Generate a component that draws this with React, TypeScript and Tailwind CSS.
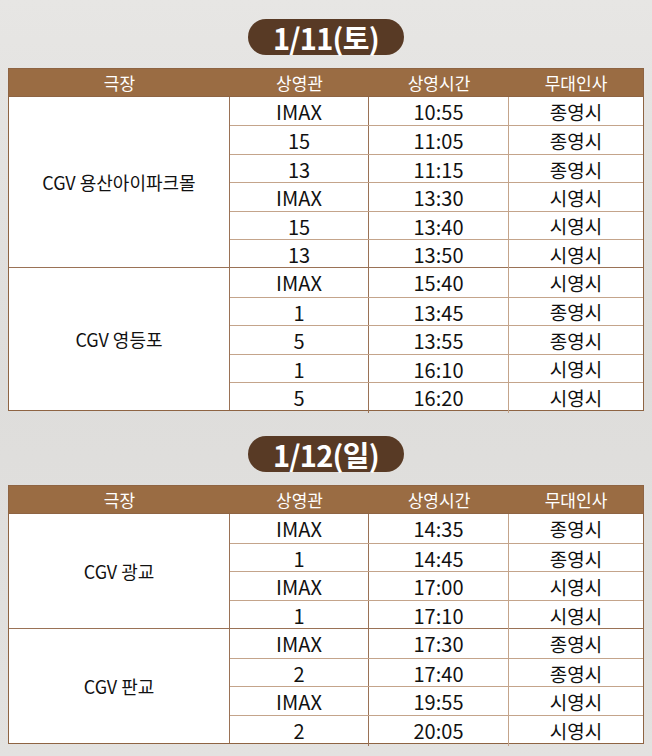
const font = { fontFamily: '"Noto Sans CJK KR", "Noto Sans", sans-serif' };

type Row = { hall: string; time: string; kind: string };
type Group = { theater: string; rows: Row[] };

const day1: Group[] = [
  {
    theater: "CGV 용산아이파크몰",
    rows: [
      { hall: "IMAX", time: "10:55", kind: "종영시" },
      { hall: "15", time: "11:05", kind: "종영시" },
      { hall: "13", time: "11:15", kind: "종영시" },
      { hall: "IMAX", time: "13:30", kind: "시영시" },
      { hall: "15", time: "13:40", kind: "시영시" },
      { hall: "13", time: "13:50", kind: "시영시" },
    ],
  },
  {
    theater: "CGV 영등포",
    rows: [
      { hall: "IMAX", time: "15:40", kind: "시영시" },
      { hall: "1", time: "13:45", kind: "종영시" },
      { hall: "5", time: "13:55", kind: "종영시" },
      { hall: "1", time: "16:10", kind: "시영시" },
      { hall: "5", time: "16:20", kind: "시영시" },
    ],
  },
];

const day2: Group[] = [
  {
    theater: "CGV 광교",
    rows: [
      { hall: "IMAX", time: "14:35", kind: "종영시" },
      { hall: "1", time: "14:45", kind: "종영시" },
      { hall: "IMAX", time: "17:00", kind: "시영시" },
      { hall: "1", time: "17:10", kind: "시영시" },
    ],
  },
  {
    theater: "CGV 판교",
    rows: [
      { hall: "IMAX", time: "17:30", kind: "종영시" },
      { hall: "2", time: "17:40", kind: "종영시" },
      { hall: "IMAX", time: "19:55", kind: "시영시" },
      { hall: "2", time: "20:05", kind: "시영시" },
    ],
  },
];

function DatePill({ label }: { label: string }) {
  return (
    <div className="flex justify-center">
      <div className="w-[156px] h-[36px] rounded-full bg-[#583a25] flex items-center justify-center text-white text-[29px] font-bold tracking-tight leading-none">
        {label}
      </div>
    </div>
  );
}

function Schedule({ groups, rowH }: { groups: Group[]; rowH: string }) {
  const heads = ["극장", "상영관", "상영시간", "무대인사"];
  return (
    <div className="mx-2 border border-[#8e6443] bg-white">
      <div className="grid grid-cols-[221px_139px_140px_134px] bg-[#9a6c43] h-[28px] items-center text-white text-[17px] border-b border-[#8e6443]">
        {heads.map((h) => (
          <div key={h} className="text-center">
            {h}
          </div>
        ))}
      </div>
      {groups.map((g, gi) => (
        <div
          key={g.theater}
          className={`grid grid-cols-[221px_413px] ${gi > 0 ? "border-t border-[#9a7256]" : ""}`}
        >
          <div className="flex items-center justify-center text-[18px] text-[#111] border-r border-[#9a7256]">
            {g.theater}
          </div>
          <div className="flex flex-col">
            {g.rows.map((r, i) => (
              <div
                key={i}
                className={`grid grid-cols-[139px_140px_134px] ${rowH} text-[20px] text-[#111] ${i > 0 ? "border-t border-[#c4a48b]" : ""}`}
              >
                <div className="flex items-center justify-center border-r border-[#9a7256]">{r.hall}</div>
                <div className="flex items-center justify-center border-r border-[#c4a48b]">{r.time}</div>
                <div className="flex items-center justify-center text-[19px]">{r.kind}</div>
              </div>
            ))}
          </div>
        </div>
      ))}
    </div>
  );
}

export default function App() {
  return (
    <div
      style={font}
      className="w-[652px] h-[756px] overflow-hidden bg-gradient-to-b from-[#e7e6e4] via-[#dedddb] to-[#e3e2e0] pt-[19px]"
    >
      <DatePill label="1/11(토)" />
      <div className="mt-[13px]">
        <Schedule groups={day1} rowH="h-[28.4px]" />
      </div>
      <div className="mt-[25px]">
        <DatePill label="1/12(일)" />
      </div>
      <div className="mt-[13px]">
        <Schedule groups={day2} rowH="h-[28.5px]" />
      </div>
    </div>
  );
}
